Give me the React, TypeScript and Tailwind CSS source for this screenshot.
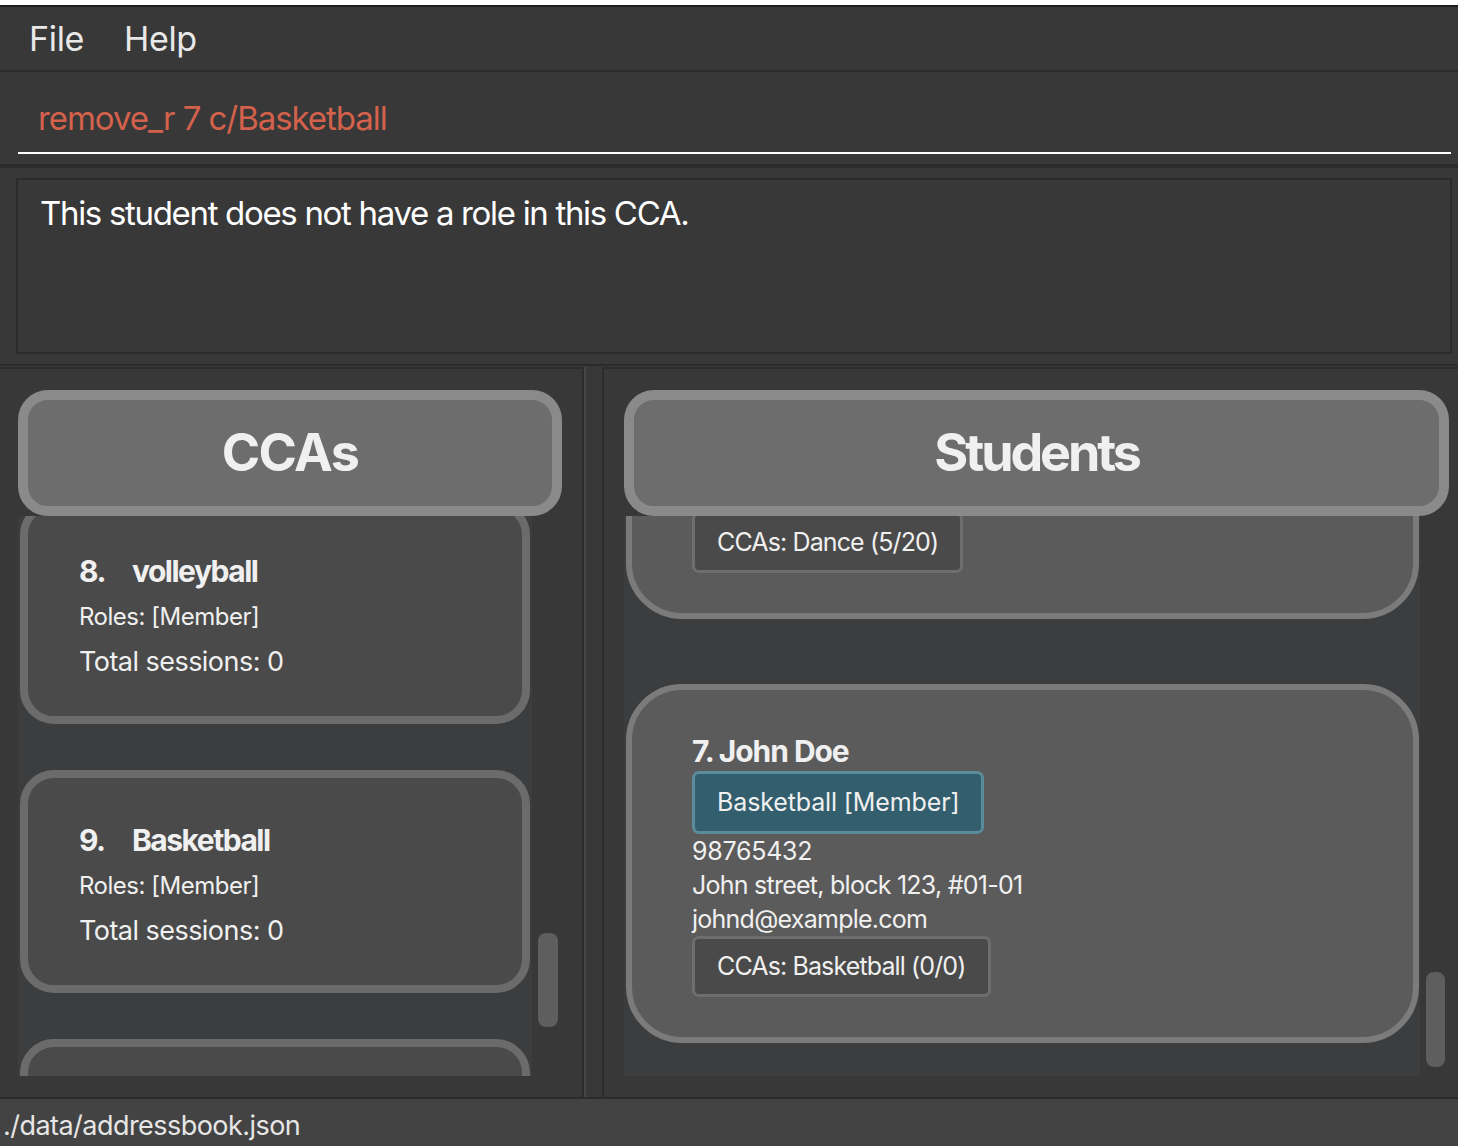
import React from 'react';

const font = { fontFamily: 'Inter, "Noto Sans", sans-serif' };

function CcaCard({ index, name, first }: { index: number; name: string; first?: boolean }) {
  return (
    <div
      className={`mx-[2px] h-[223px] shrink-0 rounded-[34px] border-[8px] border-[#6b6b6b] bg-[#4a4a4a] pl-[51px] pt-[42px] text-[#f0f0f0] ${
        first ? '-mt-[15px]' : 'mt-[46px]'
      }`}
    >
      <div className="flex text-[30px] font-bold leading-[40px] tracking-[-0.05em]">
        <span className="w-[53px]">{index}.</span>
        <span>{name}</span>
      </div>
      <div className="mt-[10px] text-[24px] leading-[32px] tracking-[-0.02em]">Roles: [Member]</div>
      <div className="mt-[12px] text-[27px] leading-[34px] tracking-[-0.02em]">Total sessions: 0</div>
    </div>
  );
}

function Tag({ text, role }: { text: string; role?: boolean }) {
  return (
    <div
      className={`inline-flex items-center rounded-[7px] border-[3px] px-[22px] text-[25px] text-[#f0f0f0] ${
        role
          ? 'h-[63px] border-[#5b8c9b] bg-[#325e6d] tracking-[-0.005em]'
          : 'h-[61px] border-[#6e6e6e] bg-[#4a4a4a] tracking-[-0.035em]'
      }`}
    >
      {text}
    </div>
  );
}

function StudentCard({ first }: { first?: boolean }) {
  return (
    <div
      className={`ml-[2px] mr-[1px] h-[359px] shrink-0 rounded-[56px] border-[6px] border-[#7b7b7b] bg-[#5b5b5b] pl-[60px] pt-[41px] text-[#f0f0f0] ${
        first ? '-mt-[256px]' : 'mt-[65px]'
      }`}
    >
      <div className="text-[30px] font-bold leading-[40px] tracking-[-0.035em]">7. John Doe</div>
      <Tag text="Basketball [Member]" role />
      <div className="text-[25px] leading-[34px] tracking-[-0.01em]">98765432</div>
      <div className="text-[25px] leading-[34px] tracking-[-0.03em]">John street, block 123, #01-01</div>
      <div className="text-[25px] leading-[34px] tracking-[-0.03em]">johnd@example.com</div>
      <Tag text={first ? 'CCAs: Dance (5/20)' : 'CCAs: Basketball (0/0)'} />
    </div>
  );
}

function Header({ title, tight }: { title: string; tight?: boolean }) {
  return (
    <div className="flex h-[126px] shrink-0 items-center justify-center rounded-[30px] border-[10px] border-[#8a8a8a] bg-[#6d6d6d]">
      <span
        className={`text-[52px] font-bold text-[#f0f0f0] ${tight ? 'tracking-[-0.06em]' : 'tracking-[-0.03em]'}`}
      >
        {title}
      </span>
    </div>
  );
}

export default function App() {
  return (
    <div className="flex h-[1146px] w-[1458px] flex-col bg-[#383838]" style={font}>
      <div className="h-[5px] shrink-0 bg-white" />
      <div className="h-[2px] shrink-0 bg-[#1e1e1e]" />

      {/* menu bar */}
      <div className="flex h-[63px] shrink-0 items-center bg-[#383838] pl-[29px] text-[34px] tracking-[-0.01em] text-[#e8e8e8]">
        <span>File</span>
        <span className="ml-[40px]">Help</span>
      </div>
      <div className="h-[2px] shrink-0 bg-[#2b2b2b]" />

      {/* command box */}
      <div className="h-[92px] shrink-0 pl-[18px] pr-[7px]">
        <div className="flex h-[82px] items-end border-b-2 border-white pb-[14px] pl-[20px] text-[33px] leading-[40px] tracking-[-0.032em] text-[#d4614c]">
          remove_r 7 c/Basketball
        </div>
      </div>
      <div className="h-[4px] shrink-0 bg-[#2b2b2b]" />

      {/* result display */}
      <div className="h-[196px] shrink-0 pl-[16px] pr-[6px] pt-[10px]">
        <div className="h-[176px] border-2 border-[#2b2b2b] pl-[22px] pt-[11px] text-[33px] leading-[44px] tracking-[-0.04em] text-white">
          This student does not have a role in this CCA.
        </div>
      </div>
      <div className="h-[2px] shrink-0 bg-[#2b2b2b]" />

      {/* panels */}
      <div className="flex h-[731px] shrink-0 pt-[1px]">
        <div className="flex w-[584px] flex-col border-t-2 border-r-2 border-[#2c2c2c] pl-[18px] pr-[20px] pt-[21px]">
          <Header title="CCAs" />
          <div className="flex h-[560px]">
            <div className="flex w-[514px] flex-col overflow-hidden bg-[#3c3d3f]">
              <CcaCard index={8} name="volleyball" first />
              <CcaCard index={9} name="Basketball" />
              <CcaCard index={10} name="Dance" />
            </div>
            <div className="ml-[6px] flex-1 pt-[417px]">
              <div className="h-[94px] w-[20px] rounded-[8px] bg-[#5e5e5e]" />
            </div>
          </div>
        </div>
        <div className="w-[2px] bg-[#464646]" />
        <div className="ml-[16px] flex flex-1 flex-col border-t-2 border-l-2 border-[#2c2c2c] pl-[20px] pr-[9px] pt-[21px]">
          <Header title="Students" tight />
          <div className="flex h-[560px]">
            <div className="flex w-[796px] flex-col overflow-hidden bg-[#3c3d3f]">
              <StudentCard first />
              <StudentCard />
            </div>
            <div className="ml-[6px] flex-1 pt-[456px]">
              <div className="h-[95px] w-[19px] rounded-[8px] bg-[#5e5e5e]" />
            </div>
          </div>
        </div>
      </div>

      {/* status bar */}
      <div className="h-[2px] shrink-0 bg-[#2b2b2b]" />
      <div className="flex h-[47px] shrink-0 items-center bg-[#434343] pl-[3px] pt-[6px] text-[27px] leading-[32px] tracking-[-0.02em] text-[#e6e6e6]">
        <span>./data/addressbook.json</span>
      </div>
    </div>
  );
}
